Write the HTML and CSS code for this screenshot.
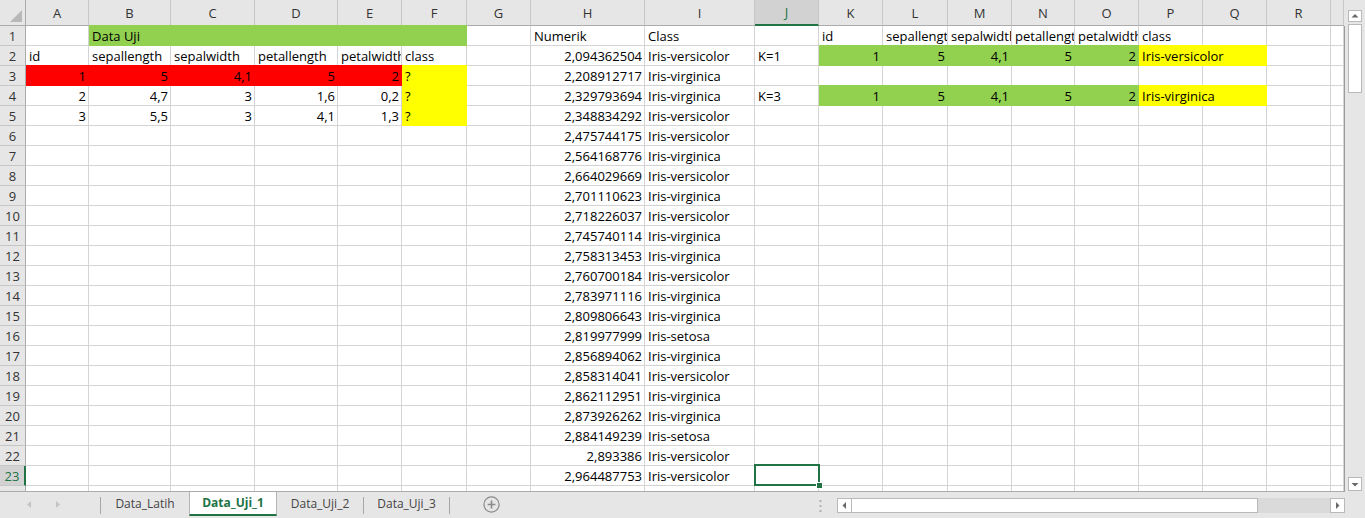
FILE: index.html
```html
<!DOCTYPE html>
<html lang="id">
<head>
<meta charset="utf-8">
<title>Data_Uji_1</title>
<link rel="stylesheet" href="styles.css">
</head>
<body>
<div class="app">
  <div class="left">
    <div class="sheet">
      <div class="row hdr"><span class="corner"></span><span>A</span><span>B</span><span>C</span><span>D</span><span>E</span><span>F</span><span>G</span><span>H</span><span>I</span><span class="on">J</span><span>K</span><span>L</span><span>M</span><span>N</span><span>O</span><span>P</span><span>Q</span><span>R</span><span></span></div>
      <div class="row"><span class="rh">1</span><span></span><span class="g s5">Data Uji</span><span></span><span>Numerik</span><span>Class</span><span></span><span>id</span><span>sepallength</span><span>sepalwidth</span><span>petallength</span><span>petalwidth</span><span>class</span><span></span><span></span><span></span></div>
      <div class="row"><span class="rh">2</span><span>id</span><span>sepallength</span><span>sepalwidth</span><span>petallength</span><span>petalwidth</span><span>class</span><span></span><span class="n">2,094362504</span><span>Iris-versicolor</span><span>K=1</span><span class="g n">1</span><span class="g n">5</span><span class="g n">4,1</span><span class="g n">5</span><span class="g n">2</span><span class="y s2">Iris-versicolor</span><span></span><span></span></div>
      <div class="row"><span class="rh">3</span><span class="r n">1</span><span class="r n">5</span><span class="r n">4,1</span><span class="r n">5</span><span class="r n">2</span><span class="y">?</span><span></span><span class="n">2,208912717</span><span>Iris-virginica</span><span></span><span></span><span></span><span></span><span></span><span></span><span></span><span></span><span></span><span></span></div>
      <div class="row"><span class="rh">4</span><span class="n">2</span><span class="n">4,7</span><span class="n">3</span><span class="n">1,6</span><span class="n">0,2</span><span class="y">?</span><span></span><span class="n">2,329793694</span><span>Iris-virginica</span><span>K=3</span><span class="g n">1</span><span class="g n">5</span><span class="g n">4,1</span><span class="g n">5</span><span class="g n">2</span><span class="y s2">Iris-virginica</span><span></span><span></span></div>
      <div class="row"><span class="rh">5</span><span class="n">3</span><span class="n">5,5</span><span class="n">3</span><span class="n">4,1</span><span class="n">1,3</span><span class="y">?</span><span></span><span class="n">2,348834292</span><span>Iris-versicolor</span><span></span><span></span><span></span><span></span><span></span><span></span><span></span><span></span><span></span><span></span></div>
      <div class="row"><span class="rh">6</span><span></span><span></span><span></span><span></span><span></span><span></span><span></span><span class="n">2,475744175</span><span>Iris-versicolor</span><span></span><span></span><span></span><span></span><span></span><span></span><span></span><span></span><span></span><span></span></div>
      <div class="row"><span class="rh">7</span><span></span><span></span><span></span><span></span><span></span><span></span><span></span><span class="n">2,564168776</span><span>Iris-virginica</span><span></span><span></span><span></span><span></span><span></span><span></span><span></span><span></span><span></span><span></span></div>
      <div class="row"><span class="rh">8</span><span></span><span></span><span></span><span></span><span></span><span></span><span></span><span class="n">2,664029669</span><span>Iris-versicolor</span><span></span><span></span><span></span><span></span><span></span><span></span><span></span><span></span><span></span><span></span></div>
      <div class="row"><span class="rh">9</span><span></span><span></span><span></span><span></span><span></span><span></span><span></span><span class="n">2,701110623</span><span>Iris-virginica</span><span></span><span></span><span></span><span></span><span></span><span></span><span></span><span></span><span></span><span></span></div>
      <div class="row"><span class="rh">10</span><span></span><span></span><span></span><span></span><span></span><span></span><span></span><span class="n">2,718226037</span><span>Iris-versicolor</span><span></span><span></span><span></span><span></span><span></span><span></span><span></span><span></span><span></span><span></span></div>
      <div class="row"><span class="rh">11</span><span></span><span></span><span></span><span></span><span></span><span></span><span></span><span class="n">2,745740114</span><span>Iris-virginica</span><span></span><span></span><span></span><span></span><span></span><span></span><span></span><span></span><span></span><span></span></div>
      <div class="row"><span class="rh">12</span><span></span><span></span><span></span><span></span><span></span><span></span><span></span><span class="n">2,758313453</span><span>Iris-virginica</span><span></span><span></span><span></span><span></span><span></span><span></span><span></span><span></span><span></span><span></span></div>
      <div class="row"><span class="rh">13</span><span></span><span></span><span></span><span></span><span></span><span></span><span></span><span class="n">2,760700184</span><span>Iris-versicolor</span><span></span><span></span><span></span><span></span><span></span><span></span><span></span><span></span><span></span><span></span></div>
      <div class="row"><span class="rh">14</span><span></span><span></span><span></span><span></span><span></span><span></span><span></span><span class="n">2,783971116</span><span>Iris-virginica</span><span></span><span></span><span></span><span></span><span></span><span></span><span></span><span></span><span></span><span></span></div>
      <div class="row"><span class="rh">15</span><span></span><span></span><span></span><span></span><span></span><span></span><span></span><span class="n">2,809806643</span><span>Iris-virginica</span><span></span><span></span><span></span><span></span><span></span><span></span><span></span><span></span><span></span><span></span></div>
      <div class="row"><span class="rh">16</span><span></span><span></span><span></span><span></span><span></span><span></span><span></span><span class="n">2,819977999</span><span>Iris-setosa</span><span></span><span></span><span></span><span></span><span></span><span></span><span></span><span></span><span></span><span></span></div>
      <div class="row"><span class="rh">17</span><span></span><span></span><span></span><span></span><span></span><span></span><span></span><span class="n">2,856894062</span><span>Iris-virginica</span><span></span><span></span><span></span><span></span><span></span><span></span><span></span><span></span><span></span><span></span></div>
      <div class="row"><span class="rh">18</span><span></span><span></span><span></span><span></span><span></span><span></span><span></span><span class="n">2,858314041</span><span>Iris-versicolor</span><span></span><span></span><span></span><span></span><span></span><span></span><span></span><span></span><span></span><span></span></div>
      <div class="row"><span class="rh">19</span><span></span><span></span><span></span><span></span><span></span><span></span><span></span><span class="n">2,862112951</span><span>Iris-virginica</span><span></span><span></span><span></span><span></span><span></span><span></span><span></span><span></span><span></span><span></span></div>
      <div class="row"><span class="rh">20</span><span></span><span></span><span></span><span></span><span></span><span></span><span></span><span class="n">2,873926262</span><span>Iris-virginica</span><span></span><span></span><span></span><span></span><span></span><span></span><span></span><span></span><span></span><span></span></div>
      <div class="row"><span class="rh">21</span><span></span><span></span><span></span><span></span><span></span><span></span><span></span><span class="n">2,884149239</span><span>Iris-setosa</span><span></span><span></span><span></span><span></span><span></span><span></span><span></span><span></span><span></span><span></span></div>
      <div class="row"><span class="rh">22</span><span></span><span></span><span></span><span></span><span></span><span></span><span></span><span class="n">2,893386</span><span>Iris-versicolor</span><span></span><span></span><span></span><span></span><span></span><span></span><span></span><span></span><span></span><span></span></div>
      <div class="row"><span class="rh on">23</span><span></span><span></span><span></span><span></span><span></span><span></span><span></span><span class="n">2,964487753</span><span>Iris-versicolor</span><span class="cur"><i class="sel"></i></span><span></span><span></span><span></span><span></span><span></span><span></span><span></span><span></span><span></span></div>
      <div class="row"><span class="rh">24</span><span></span><span></span><span></span><span></span><span></span><span></span><span></span><span></span><span></span><span></span><span></span><span></span><span></span><span></span><span></span><span></span><span></span><span></span><span></span></div>
    </div>
    <div class="tabbar">
      <div class="nav">
        <svg width="100" height="26" viewBox="0 0 100 26"><polygon points="31,9 31,16 27,12.5" fill="#c4c4c4"/><polygon points="56,9 56,16 60,12.5" fill="#c4c4c4"/></svg>
      </div>
      <span class="sep"></span>
      <div class="tab t1">Data_Latih</div>
      <div class="tab on">Data_Uji_1</div>
      <div class="tab t3">Data_Uji_2</div>
      <span class="sep"></span>
      <div class="tab t4">Data_Uji_3</div>
      <span class="sep"></span>
      <svg class="plus" width="17" height="17" viewBox="0 0 17 17"><circle cx="8.5" cy="8.5" r="7.6" fill="none" stroke="#8a8a8a" stroke-width="1.2"/><path d="M8.5 4.6V12.4M4.6 8.5H12.4" stroke="#8a8a8a" stroke-width="1.6"/></svg>
      <div class="grow"></div>
      <svg class="split" width="3" height="14" viewBox="0 0 3 14"><rect x="0.5" y="1" width="2" height="2" fill="#b0b0b0"/><rect x="0.5" y="6" width="2" height="2" fill="#b0b0b0"/><rect x="0.5" y="11" width="2" height="2" fill="#b0b0b0"/></svg>
      <div class="hscroll">
        <div class="hbtn"><svg width="13" height="13" viewBox="0 0 13 13"><polygon points="8,3 8,10 4.5,6.5" fill="#6a6a6a"/></svg></div>
        <div class="hthumb"></div>
        <div class="htrack"></div>
        <div class="hbtn"><svg width="13" height="13" viewBox="0 0 13 13"><polygon points="5,3 5,10 8.5,6.5" fill="#6a6a6a"/></svg></div>
      </div>
    </div>
  </div>
  <div class="vscroll">
    <div class="vbtn"><svg width="12" height="10" viewBox="0 0 12 10"><polygon points="2.5,6.5 9.5,6.5 6,3" fill="#6a6a6a"/></svg></div>
    <div class="vthumb"></div>
    <div class="vfill"></div>
    <div class="vbtn down"><svg width="12" height="12" viewBox="0 0 12 12"><polygon points="2.5,5 9.5,5 6,8.5" fill="#6a6a6a"/></svg></div>
  </div>
</div>
</body>
</html>
```
FILE: styles.css
```css
* { box-sizing: border-box; margin: 0; padding: 0; }
html, body { width: 1365px; height: 518px; overflow: hidden; background: #fff; }
body { font-family: "Open Sans", "Liberation Sans", sans-serif; font-size: 13px; color: #000; }

.app { display: flex; height: 518px; }
.left { width: 1345px; display: flex; flex-direction: column; }

.sheet { height: 491px; overflow: hidden; }

.row {
  display: grid;
  grid-template-columns: 26px 63px 82px 84px 83px 64px 65px 64px 114px 110px 64px 64px 65px 64px 63px 64px 64px 64px 64px 13px;
  height: 20px;
  width: 1345px;
  border-right: 1px solid #9b9b9b;
}
.row > span {
  border-right: 1px solid #d4d4d4;
  border-bottom: 1px solid #d4d4d4;
  padding: 0 2px 0 3px;
  line-height: 21px;
  white-space: nowrap;
  overflow: hidden;
}

/* column header row */
.row.hdr { height: 26px; background: #e6e6e6; border-right-color: #e6e6e6; }
.row.hdr > span {
  background: #e6e6e6;
  border-right-color: #c6c6c6;
  border-bottom-color: #ababab;
  text-align: center;
  line-height: 26px;
  color: #333;
  padding: 0;
}
.row.hdr > span.on {
  background: #d2d2d2;
  color: #217346;
  border-bottom: 2px solid #217346;
  line-height: 25px;
}
.row.hdr > span.corner {
  display: flex;
  justify-content: flex-end;
  align-items: flex-end;
  padding: 0 3px 3px 0;
  border-right-color: #ababab;
}
.corner::after {
  content: "";
  border-left: 12px solid transparent;
  border-bottom: 12px solid #b8b8b8;
}

/* row header */
.row > span.rh {
  background: #e6e6e6;
  border-right-color: #ababab;
  border-bottom-color: #c6c6c6;
  text-align: center;
  color: #333;
  padding: 0;
}
.row > span.rh.on {
  background: #d2d2d2;
  color: #217346;
  border-right: 2px solid #217346;
}

/* cell kinds */
.row > span.n { text-align: right; }
.row > span.s5 { grid-column: span 5; }
.row > span.s2 { grid-column: span 2; }
.row > span.g { background: #92d050; border-color: #92d050; box-shadow: 0 -1px 0 #92d050; }
.row > span.r { background: #ff0000; border-color: #ff0000; box-shadow: 0 -1px 0 #ff0000; }
.row > span.y { background: #ffff00; border-color: #ffff00; box-shadow: 0 -1px 0 #ffff00; }

/* active cell */
.row > span.cur { position: relative; overflow: visible; }
.sel {
  position: absolute;
  left: -1px;
  top: -2px;
  width: 66px;
  height: 22px;
  border: 2px solid #217346;
  z-index: 2;
}
.sel::after {
  content: "";
  position: absolute;
  right: -4px;
  bottom: -4px;
  width: 5px;
  height: 5px;
  background: #217346;
  box-shadow: 0 0 0 1px #fff;
}

/* sheet tabs */
.tabbar {
  height: 27px;
  border-top: 1px solid #ababab;
  background: #e6e6e6;
  display: flex;
  align-items: flex-start;
  font-size: 12px;
  color: #444;
}
.nav { width: 100px; height: 26px; display: flex; }
.sep { width: 1px; height: 17px; background: #a6a6a6; margin-top: 5px; }
.tab {
  height: 24px;
  line-height: 23px;
  text-align: center;
  white-space: nowrap;
}
.tab.t1 { width: 88px; }
.tab.t3 { width: 86px; }
.tab.t4 { width: 85px; }
.tab.on {
  width: 88px;
  background: #fff;
  border-left: 1px solid #b4b4b4;
  border-right: 1px solid #b4b4b4;
  border-bottom: 2px solid #217346;
  color: #217346;
  font-weight: 700;
  line-height: 22px;
}
.plus { margin: 4px 0 0 33px; }
.grow { flex: 1; }
.split { margin: 7px 15px 0 0; }

.hscroll { width: 508px; height: 15px; margin-top: 6px; display: flex; }
.hbtn {
  width: 15px;
  height: 15px;
  background: #fff;
  border: 1px solid #b9b9b9;
  display: flex;
  align-items: center;
  justify-content: center;
}
.hthumb { width: 405px; background: #fff; border-top: 1px solid #b9b9b9; border-bottom: 1px solid #b9b9b9; }
.htrack { width: 73px; background: #dadada; border-left: 1px solid #b9b9b9; }

/* vertical scrollbar */
.vscroll {
  width: 20px;
  height: 518px;
  background: #e6e6e6;
  display: flex;
  flex-direction: column;
  padding: 10px 3px 27px;
}
.vbtn {
  height: 12px;
  background: #fff;
  border: 1px solid #b9b9b9;
  display: flex;
  align-items: center;
  justify-content: center;
  overflow: hidden;
}
.vbtn.down { height: 14px; }
.vthumb { height: 69px; margin-top: 2px; background: #fff; border: 1px solid #b9b9b9; }
.vfill { flex: 1; }
```
